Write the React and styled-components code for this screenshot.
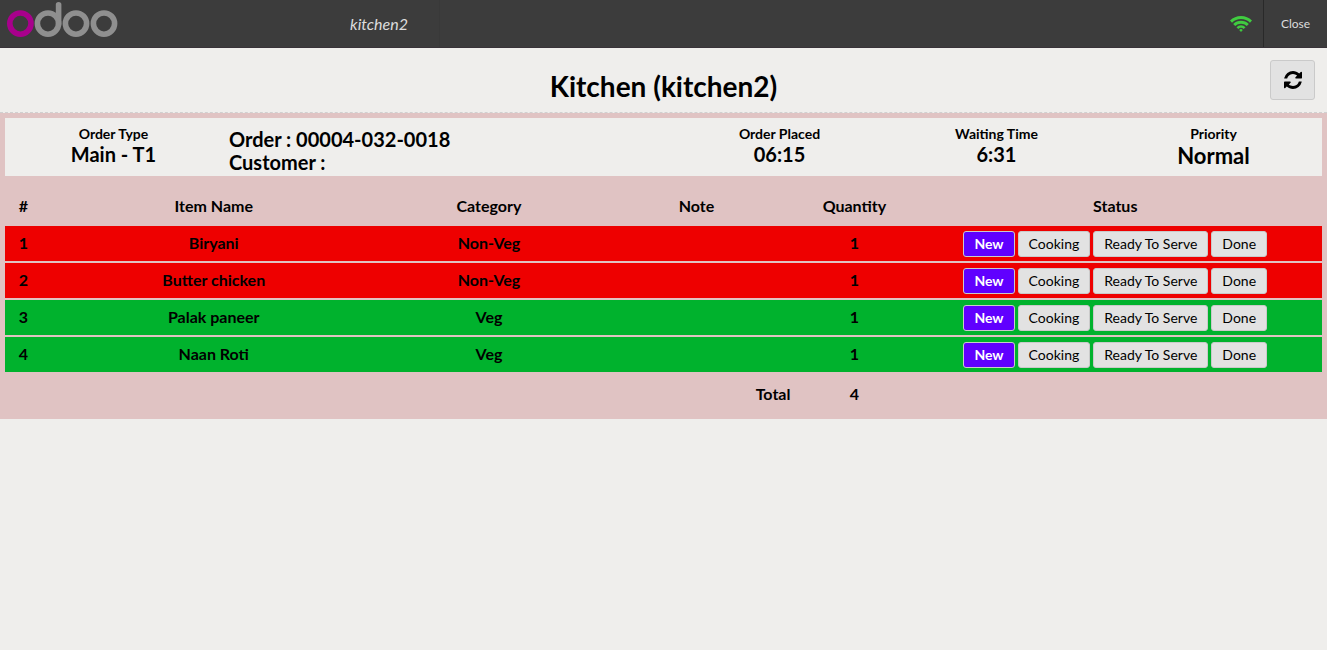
import React, { useState } from "react";
import styled, { createGlobalStyle } from "styled-components";

const GlobalStyle = createGlobalStyle`
  *, *::before, *::after { box-sizing: border-box; }
  html, body { margin: 0; padding: 0; }
  body {
    background: #efeeec;
    color: #000;
    font-family: Lato, "Liberation Sans", sans-serif;
    font-size: 16px;
  }
  button { font-family: inherit; margin: 0; cursor: pointer; }
`;

const TopBar = styled.header`
  display: flex;
  height: 48px;
  background: #3c3c3c;
  border-bottom: 1px solid #393339;
  color: #ddd;
`;

const Branding = styled.div`
  display: flex;
  justify-content: space-between;
  flex: 0 0 440px;
  padding: 0 31px 0 7px;
  border-right: 1px solid #393939;
`;

const Logo = styled.svg`
  display: block;
  width: 111px;
  height: 40px;
`;

const UserName = styled.span`
  font-size: 16px;
  font-style: italic;
  line-height: 48px;
`;

const TopActions = styled.div`
  display: flex;
  align-items: stretch;
  margin-left: auto;
`;

const NetworkStatus = styled.div`
  display: flex;
  align-items: center;
  padding: 0 11px;
`;

const CloseButton = styled.button`
  width: 64px;
  padding: 0;
  border: 0;
  border-left: 1px solid #292929;
  background: transparent;
  color: #ddd;
  font-size: 12px;
`;

const TitleBar = styled.div`
  display: grid;
  grid-template-columns: 1fr auto 1fr;
  align-items: start;
  height: 65px;
  padding: 12px;
  border-bottom: 1px dashed #d0d0d0;
`;

const Title = styled.h1`
  grid-column: 2;
  margin: 0;
  padding-top: 8px;
  font-size: 28px;
  line-height: 36px;
`;

const RefreshButton = styled.button`
  display: flex;
  align-items: center;
  justify-content: center;
  justify-self: end;
  width: 45px;
  height: 40px;
  padding: 0;
  border: 1px solid #cacaca;
  border-radius: 3px;
  background: #e2e2e2;
`;

const Order = styled.section`
  padding: 5px 5px 3px;
  background: #e0c3c3;
`;

const OrderSummary = styled.div`
  display: grid;
  grid-template-columns: 217fr 449fr 217fr 217fr 217fr;
  height: 58px;
  background: #efeeec;
  font-weight: 700;
`;

const SummaryCell = styled.div`
  padding-top: 8px;
  text-align: center;
`;

const SummaryLabel = styled.div`
  font-size: 14px;
  line-height: 16px;
`;

const SummaryValue = styled.div`
  font-size: ${(p) => (p.$large ? 22 : 20)}px;
  line-height: ${(p) => (p.$large ? 28 : 25)}px;
`;

const OrderIdentity = styled.div`
  padding: 10px 7px 0;
  font-size: 20px;
  line-height: 23px;
`;

const ItemTable = styled.table`
  width: 100%;
  margin-top: 10px;
  table-layout: fixed;
  border-collapse: separate;
  border-spacing: 0 2px;
  font-size: 16px;
  line-height: 20px;
  font-weight: 700;
  text-align: center;
`;

const Column = styled.col`
  width: ${(p) => p.$share}%;
`;

const HeadCell = styled.th`
  height: 36px;
  padding: 0;
`;

const ItemRow = styled.tr`
  background: ${(p) => (p.$veg ? "#00b22d" : "#ee0000")};
`;

const Cell = styled.td`
  height: 35px;
  padding: 0 0 2px;
`;

const StatusCell = styled.td`
  height: 35px;
  padding: 0;
`;

const FootCell = styled.td`
  height: 40px;
  padding: 0 10px;
  text-align: ${(p) => p.$align || "center"};
`;

const StatusGroup = styled.div`
  display: flex;
  justify-content: center;
  gap: 3px;
`;

const StatusButton = styled.button`
  height: 26px;
  padding: 0 10px;
  border: 1px solid #cacaca;
  border-radius: 3px;
  background: ${(p) => (p.$active ? "#6000ff" : "#e2e2e2")};
  color: ${(p) => (p.$active ? "#fff" : "#000")};
  font-size: 14px;
  font-weight: ${(p) => (p.$active ? 700 : 400)};
  line-height: 24px;
`;

const OdooLogo = () => (
  <Logo viewBox="0 0 111 40" role="img" aria-label="odoo" fill="none" strokeWidth="5.6">
    <g stroke="#8f8f8f">
      <circle cx="41" cy="23.6" r="10.6" />
      <circle cx="69" cy="23.6" r="10.6" />
      <circle cx="97" cy="23.6" r="10.6" />
      <path d="M51.6 24V4.8" strokeLinecap="round" />
    </g>
    <circle cx="13.4" cy="23.6" r="10.6" stroke="#a8008c" />
  </Logo>
);

const WifiIcon = () => (
  <svg width="22" height="16" viewBox="0 0 22 16" fill="none" stroke="#40cc40" strokeWidth="2.9" role="img" aria-label="Connected">
    <path d="M1 5.6A14.2 14.2 0 0 1 21 5.6" />
    <path d="M4.2 9.1A9.6 9.6 0 0 1 17.8 9.1" />
    <path d="M7.4 12.1A5.1 5.1 0 0 1 14.6 12.1" strokeWidth="2.6" />
    <path d="M11 12.8L12.8 13.9L11 16L9.2 13.9Z" fill="#40cc40" stroke="none" />
  </svg>
);

const RefreshIcon = () => (
  <svg width="18" height="18" viewBox="128 128 1536 1536" aria-hidden="true">
    <path d="M1639 1056q0 5-1 7-64 268-268 434.5t-478 166.5q-146 0-282.5-55t-243.5-157l-129 129q-19 19-45 19t-45-19-19-45v-448q0-26 19-45t45-19h448q26 0 45 19t19 45-19 45l-137 137q71 66 161 102t187 36q134 0 250-65t186-179q11-17 53-117 8-23 30-23h192q13 0 22.5 9.5t9.5 22.5zm25-800v448q0 26-19 45t-45 19h-448q-26 0-45-19t-19-45 19-45l138-138q-148-137-349-137-134 0-250 65t-186 179q-11 17-53 117-8 23-30 23h-199q-13 0-22.5-9.5t-9.5-22.5v-7q65-268 270-434.5t480-166.5q146 0 284 55.5t245 156.5l130-129q19-19 45-19t45 19 19 45z" />
  </svg>
);

const COLUMNS = [
  ["#", 2.8],
  ["Item Name", 26.1],
  ["Category", 15.7],
  ["Note", 15.8],
  ["Quantity", 8.2],
  ["Status", 31.4],
];

const STATUSES = ["New", "Cooking", "Ready To Serve", "Done"];

const ITEMS = [
  { name: "Biryani", category: "Non-Veg", quantity: 1 },
  { name: "Butter chicken", category: "Non-Veg", quantity: 1 },
  { name: "Palak paneer", category: "Veg", quantity: 1 },
  { name: "Naan Roti", category: "Veg", quantity: 1 },
];

const Summary = ({ label, value, large }) => (
  <SummaryCell>
    <SummaryLabel>{label}</SummaryLabel>
    <SummaryValue $large={large}>{value}</SummaryValue>
  </SummaryCell>
);

const OrderItem = ({ number, item }) => {
  const [status, setStatus] = useState("New");
  return (
    <ItemRow $veg={item.category === "Veg"}>
      <Cell>{number}</Cell>
      <Cell>{item.name}</Cell>
      <Cell>{item.category}</Cell>
      <Cell />
      <Cell>{item.quantity}</Cell>
      <StatusCell>
        <StatusGroup>
          {STATUSES.map((s) => (
            <StatusButton key={s} type="button" $active={s === status} onClick={() => setStatus(s)}>
              {s}
            </StatusButton>
          ))}
        </StatusGroup>
      </StatusCell>
    </ItemRow>
  );
};

export default function App() {
  const total = ITEMS.reduce((sum, item) => sum + item.quantity, 0);
  return (
    <>
      <GlobalStyle />
      <TopBar>
        <Branding>
          <OdooLogo />
          <UserName>kitchen2</UserName>
        </Branding>
        <TopActions>
          <NetworkStatus>
            <WifiIcon />
          </NetworkStatus>
          <CloseButton type="button">Close</CloseButton>
        </TopActions>
      </TopBar>
      <main>
        <TitleBar>
          <Title>Kitchen (kitchen2)</Title>
          <RefreshButton type="button" aria-label="Refresh">
            <RefreshIcon />
          </RefreshButton>
        </TitleBar>
        <Order>
          <OrderSummary>
            <Summary label="Order Type" value="Main - T1" />
            <OrderIdentity>
              <div>Order : 00004-032-0018</div>
              <div>Customer :</div>
            </OrderIdentity>
            <Summary label="Order Placed" value="06:15" />
            <Summary label="Waiting Time" value="6:31" />
            <Summary label="Priority" value="Normal" large />
          </OrderSummary>
          <ItemTable>
            <colgroup>
              {COLUMNS.map(([name, share]) => (
                <Column key={name} $share={share} />
              ))}
            </colgroup>
            <thead>
              <tr>
                {COLUMNS.map(([name]) => (
                  <HeadCell key={name} scope="col">{name}</HeadCell>
                ))}
              </tr>
            </thead>
            <tbody>
              {ITEMS.map((item, i) => (
                <OrderItem key={item.name} number={i + 1} item={item} />
              ))}
            </tbody>
            <tfoot>
              <tr>
                <FootCell colSpan={4} $align="right">Total</FootCell>
                <FootCell>{total}</FootCell>
                <FootCell />
              </tr>
            </tfoot>
          </ItemTable>
        </Order>
      </main>
    </>
  );
}
